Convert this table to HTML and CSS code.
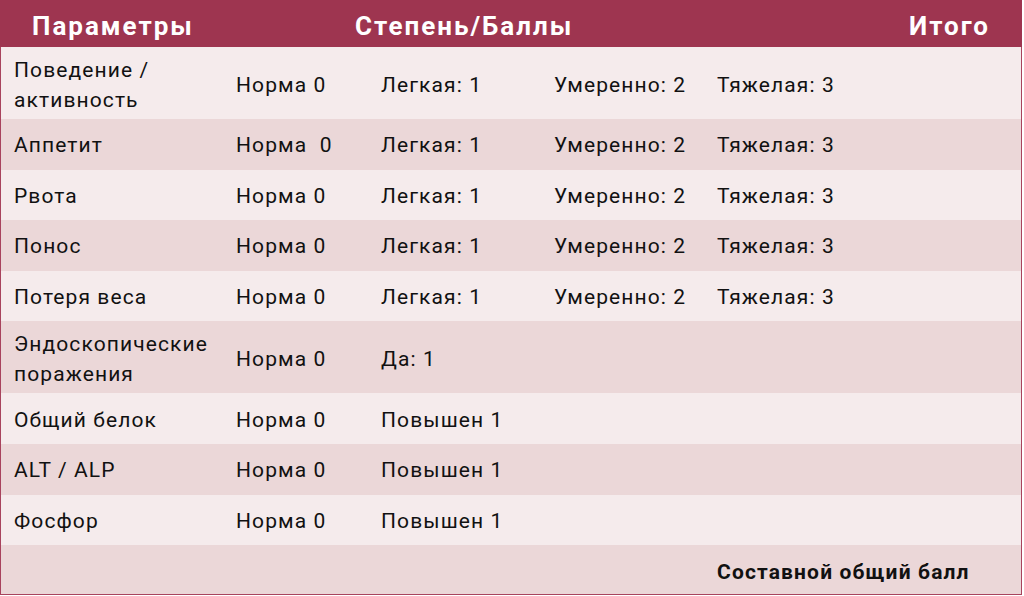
FILE: index.html
```html
<!DOCTYPE html>
<html lang="ru">
<head>
<meta charset="utf-8">
<link rel="stylesheet" href="styles.css">
</head>
<body>
<div class="table">
  <div class="head">
    <div class="h-param">Параметры</div>
    <div class="h-degree">Степень/Баллы</div>
    <div class="h-total">Итого</div>
  </div>
  <div class="row light tall"><div class="c1">Поведение /<br>активность</div><div>Норма 0</div><div>Легкая: 1</div><div>Умеренно: 2</div><div>Тяжелая: 3</div></div>
  <div class="row dark"><div class="c1">Аппетит</div><div>Норма&nbsp; 0</div><div>Легкая: 1</div><div>Умеренно: 2</div><div>Тяжелая: 3</div></div>
  <div class="row light"><div class="c1">Рвота</div><div>Норма 0</div><div>Легкая: 1</div><div>Умеренно: 2</div><div>Тяжелая: 3</div></div>
  <div class="row dark"><div class="c1">Понос</div><div>Норма 0</div><div>Легкая: 1</div><div>Умеренно: 2</div><div>Тяжелая: 3</div></div>
  <div class="row light"><div class="c1">Потеря веса</div><div>Норма 0</div><div>Легкая: 1</div><div>Умеренно: 2</div><div>Тяжелая: 3</div></div>
  <div class="row dark tall"><div class="c1">Эндоскопические<br>поражения</div><div>Норма 0</div><div>Да: 1</div><div></div><div></div></div>
  <div class="row light"><div class="c1">Общий белок</div><div>Норма 0</div><div>Повышен 1</div><div></div><div></div></div>
  <div class="row dark"><div class="c1">ALT / ALP</div><div>Норма 0</div><div>Повышен 1</div><div></div><div></div></div>
  <div class="row light"><div class="c1">Фосфор</div><div>Норма 0</div><div>Повышен 1</div><div></div><div></div></div>
  <div class="row dark last"><div class="c1"></div><div></div><div></div><div></div><div class="bold">Составной общий балл</div></div>
</div>
</body>
</html>
```

FILE: styles.css
```css
html, body {
  margin: 0;
  padding: 0;
  background: #ffffff;
}
body {
  font-family: Roboto, "Liberation Sans", sans-serif;
  color: #111111;
}
.table {
  width: 1022px;
  height: 595px;
  box-sizing: border-box;
  border: 1px solid #a8435d;
  border-top: none;
  display: flex;
  flex-direction: column;
}
.head {
  height: 47px;
  box-sizing: border-box;
  padding-top: 4px;
  margin: 0 -1px;
  background: #9e3550;
  color: #ffffff;
  font-weight: 700;
  font-size: 26px;
  letter-spacing: 2px;
  display: flex;
  align-items: center;
}
.h-param { width: 323px; padding-left: 32px; }
.h-degree { flex: 1; }
.h-total { padding-right: 32px; }
.row {
  display: grid;
  grid-template-columns: 222px 145px 173px 163px 1fr;
  align-items: center;
  height: 50.6px;
  font-size: 21px;
  letter-spacing: 1.1px;
  line-height: 30px;
  padding-top: 2px;
  box-sizing: border-box;
}
.row > div { padding-left: 13px; }
.row.tall { height: 72px; padding-top: 4px; }
.row.last { flex: 1; height: auto; align-items: end; padding-bottom: 7px; }
.light { background: #f5ebec; }
.dark { background: #ebd7d8; }
.bold { font-weight: 700; letter-spacing: 1.15px; }
```
